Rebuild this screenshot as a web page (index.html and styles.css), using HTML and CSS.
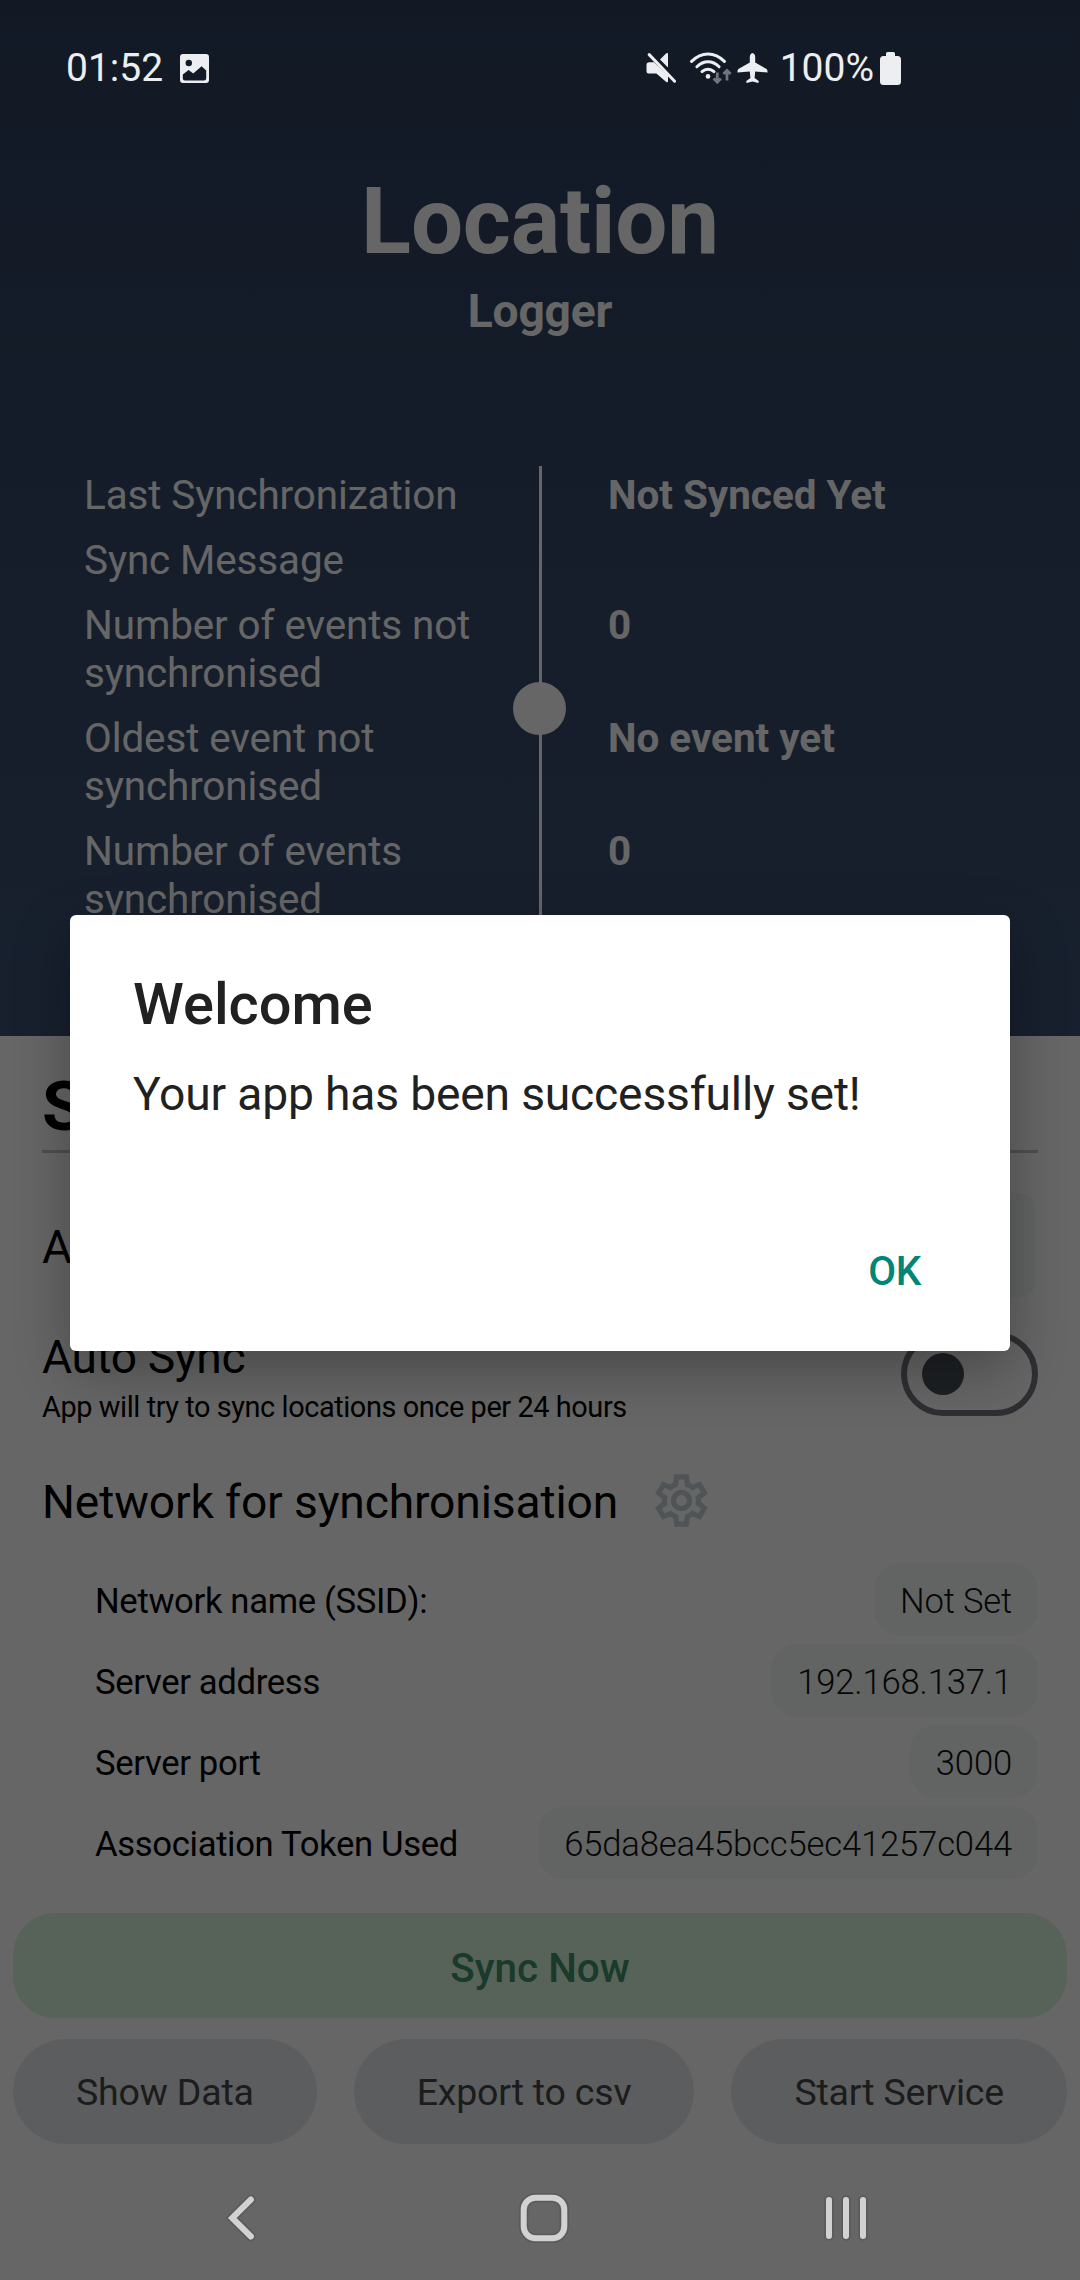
FILE: index.html
```
<!DOCTYPE html>
<html lang="en">
<head>
<meta charset="utf-8">
<title>Location Logger</title>
<link rel="stylesheet" href="styles.css">
</head>
<body>
<div class="screen">
  <header class="hero">
    <h1 class="hero-title">Location</h1>
    <p class="hero-subtitle">Logger</p>
    <div class="stats">
      <span class="stat-label">Last Synchronization</span>
      <span class="stat-value">Not Synced Yet</span>
      <span class="stat-label">Sync Message</span>
      <span class="stat-value"></span>
      <span class="stat-label">Number of events not synchronised</span>
      <span class="stat-value">0</span>
      <span class="stat-label">Oldest event not synchronised</span>
      <span class="stat-value">No event yet</span>
      <span class="stat-label">Number of events synchronised</span>
      <span class="stat-value">0</span>
      <div class="stat-line"><i class="stat-dot"></i></div>
    </div>
  </header>

  <main class="content">
    <section class="settings">
      <h2 class="settings-title">S</h2>
      <div class="row">
        <span class="row-title row-title-app">A</span>
        <span class="app-button"></span>
      </div>
      <div class="row row-sync">
        <div class="row-text">
          <span class="row-title">Auto Sync</span>
          <span class="row-note">App will try to sync locations once per 24 hours</span>
        </div>
        <span class="switch"><i class="switch-thumb"></i></span>
      </div>
      <div class="row-network">
        <h3 class="network-title">Network for synchronisation</h3>
        <svg class="gear" viewBox="0 -960 960 960"><path d="m370-80-16-128q-13-5-24.5-12T307-235l-119 50L78-375l103-78q-1-7-1-13.5v-27q0-6.5 1-13.5L78-585l110-190 119 50q11-8 23-15t24-12l16-128h220l16 128q13 5 24.5 12t22.5 15l119-50 110 190-103 78q1 7 1 13.5v27q0 6.5-2 13.5l103 78-110 190-118-50q-11 8-23 15t-24 12L590-80H370Zm70-80h79l14-106q31-8 57.5-23.5T639-327l99 41 39-68-86-65q5-14 7-29.5t2-31.5q0-16-2-31.5t-7-29.5l86-65-39-68-99 42q-22-23-48.5-38.5T533-694l-13-106h-79l-14 106q-31 8-57.5 23.5T321-633l-99-41-39 68 86 64q-5 15-7 30t-2 32q0 16 2 31t7 30l-86 65 39 68 99-42q22 23 48.5 38.5T427-266l13 106Z"/><circle class="gear-hub" cx="480" cy="-480" r="122"/></svg>
      </div>
      <dl class="network">
        <div class="network-row"><dt>Network name (SSID):</dt><dd>Not Set</dd></div>
        <div class="network-row"><dt>Server address</dt><dd>192.168.137.1</dd></div>
        <div class="network-row"><dt>Server port</dt><dd>3000</dd></div>
        <div class="network-row"><dt>Association Token Used</dt><dd>65da8ea45bcc5ec41257c044</dd></div>
      </dl>
    </section>
    <section class="actions">
      <button class="btn btn-sync">Sync Now</button>
      <div class="btn-row">
        <button class="btn">Show Data</button>
        <button class="btn">Export to csv</button>
        <button class="btn">Start Service</button>
      </div>
    </section>
  </main>

  <div class="scrim">
    <div class="dialog">
      <h2 class="dialog-title">Welcome</h2>
      <p class="dialog-text">Your app has been successfully set!</p>
      <button class="dialog-ok">OK</button>
    </div>
  </div>

  <div class="status-bar">
    <div class="status-left">
      <span>01:52</span>
      <svg class="icon-image" viewBox="0 0 29 29"><path fill-rule="evenodd" d="M3 0H26Q29 0 29 3V26Q29 29 26 29H3Q0 29 0 26V3Q0 0 3 0ZM8.8 5.8A3.2 3.2 0 1 0 8.8 12.2A3.2 3.2 0 1 0 8.8 5.8ZM2.8 20.5V24.2Q2.8 26.4 5 26.4H24Q26.2 26.4 26.2 24.2V16.5L21.6 12.2L13.2 19.4L8.6 16Z"/></svg>
    </div>
    <div class="status-right">
      <svg class="icon-mute" viewBox="0 0 30 30"><path d="M3.2 9.3H8L22 22.6V28.6Q21.6 30 20 28.8L10.4 20.6H3.2Q.5 20.6 .5 18V12Q.5 9.3 3.2 9.3ZM14 6.6L20 .4Q22 -.8 22 1.2V14.4Z"/><path class="stroke" d="M3.2 1.6L28.6 28.2"/></svg>
      <svg class="icon-wifi" viewBox="0 0 42 32"><g class="stroke"><path d="M1.6 9.4Q9 2 18 2T34.4 9.4"/><path d="M6.9 14.8Q12 9.8 18 9.8T29.1 14.8"/><path d="M12 19.6Q14.6 17.2 18 17.2T24 19.6"/></g><circle cx="18" cy="24.4" r="2.3"/><g class="traffic"><path d="M27.3 20.5V30M23.7 26.6L27.3 30.2L30.9 26.6M37 28.4V18.6M33.4 22L37 18.4L40.6 22"/></g></svg>
      <svg class="icon-plane" viewBox="0 0 31 30"><path d="M15.5 0Q18 .6 18.2 4V9.6L29.6 16Q30.6 16.8 30.6 19.4L18.2 18.6L17.6 25L21.4 27.8Q22 29 21.4 30L15.5 28.6L9.6 30Q9 29 9.6 27.8L13.4 25L12.8 18.6L.4 19.4Q.4 16.8 1.4 16L12.8 9.6V4Q13 .6 15.5 0Z"/></svg>
      <span class="battery-text">100%</span>
      <svg class="icon-battery" viewBox="0 0 21 33"><path d="M7.6 0H13.4Q15 0 15 1.6V4H17.5Q21 4 21 7.5V29.5Q21 33 17.5 33H3.5Q0 33 0 29.5V7.5Q0 4 3.5 4H6V1.6Q6 0 7.6 0Z"/></svg>
    </div>
  </div>

  <div class="nav-bar">
    <svg viewBox="0 0 60 60"><path class="halo" d="M39.9 11.5L21.2 30L39.9 48.5"/><path d="M39.9 11.5L21.2 30L39.9 48.5"/></svg>
    <svg viewBox="0 0 60 60"><rect class="halo" x="9.7" y="9.7" width="40.6" height="40.6" rx="12"/><rect x="9.7" y="9.7" width="40.6" height="40.6" rx="12"/></svg>
    <svg viewBox="0 0 60 60"><path class="halo" d="M13 12V48M30 12V48M47 12V48"/><path d="M13 12V48M30 12V48M47 12V48"/></svg>
  </div>
</div>
</body>
</html>
```
FILE: styles.css
```
* { box-sizing: border-box; }

body, h1, h2, h3, p, dl, dd { margin: 0; }

body {
  font-family: Roboto, "Noto Sans", sans-serif;
  color: #000;
  background: #fff;
}

button { font-family: inherit; border: 0; }

.screen {
  position: relative;
  width: 1080px;
  height: 2280px;
  overflow: hidden;
  background: #fff;
}

/* Header */
.hero {
  height: 1036px;
  padding-top: 168px;
  color: #fff;
  background: linear-gradient(#2f405e, #3d5275);
}

.hero-title {
  font-size: 92.4px;
  line-height: 108px;
  letter-spacing: -0.2px;
  text-align: center;
}

.hero-subtitle {
  margin-top: 8px;
  font-size: 46.2px;
  font-weight: 700;
  line-height: 54px;
  letter-spacing: -0.2px;
  text-align: center;
}

.stats {
  display: grid;
  grid-template-columns: 455px 3px 1fr;
  grid-template-rows: 65px 65px repeat(3, 113px);
  margin-top: 128px;
  padding-left: 84px;
  font-size: 40.4px;
  line-height: 48px;
}

.stat-label {
  grid-column: 1;
  padding: 6px 55px 0 0;
  letter-spacing: -0.1px;
}

.stat-value {
  grid-column: 3;
  padding: 6px 0 0 66px;
  font-weight: 700;
}

.stat-line {
  grid-column: 2;
  grid-row: 1 / 6;
  display: flex;
  align-items: center;
  justify-content: center;
  height: 484px;
  background: #fff;
}

.stat-dot {
  flex: none;
  width: 53px;
  height: 53px;
  margin-left: -2px;
  border-radius: 50%;
  background: #fff;
}

/* Settings */
.settings { padding: 30px 42px 0; }

.settings-title {
  height: 87px;
  border-bottom: 3px solid #cac4d0;
  font-size: 69.3px;
  line-height: 82px;
}

.row {
  display: flex;
  align-items: center;
  justify-content: space-between;
  margin-top: 40px;
}

.row-title {
  font-size: 46.2px;
  line-height: 54px;
  letter-spacing: -0.4px;
}

.row-title-app { padding-top: 3px; }

.app-button {
  width: 240px;
  height: 105px;
  margin-right: 3px;
  border-radius: 16px;
  background: #f3faf7;
}

.row-sync {
  align-items: flex-start;
  margin-top: 32px;
}

.row-text {
  display: flex;
  flex-direction: column;
  gap: 6px;
}

.row-note {
  font-size: 28.9px;
  line-height: 34px;
  letter-spacing: -0.42px;
}

.switch {
  display: flex;
  align-items: center;
  width: 137px;
  height: 84px;
  margin-top: 2px;
  padding-left: 15px;
  border: 6px solid #79747e;
  border-radius: 42px;
}

.switch-thumb {
  width: 42px;
  height: 42px;
  border-radius: 50%;
  background: #4a5259;
}

.row-network {
  display: flex;
  align-items: center;
  gap: 32px;
  margin-top: 45px;
}

.network-title {
  padding-top: 2px;
  font-size: 46.2px;
  font-weight: 400;
  line-height: 54px;
  letter-spacing: -0.14px;
}

.gear {
  width: 63px;
  height: 63px;
  fill: #c6d2da;
}

.gear-hub {
  fill: none;
  stroke: #c6d2da;
  stroke-width: 80px;
}

.network {
  display: flex;
  flex-direction: column;
  gap: 8px;
  margin-top: 31px;
  padding-left: 53px;
  font-size: 34.65px;
  line-height: 70px;
}

.network-row {
  display: flex;
  justify-content: space-between;
}

.network-row dt {
  padding-top: 3px;
  letter-spacing: -0.34px;
}

.network-row dd {
  padding: 3px 26px 0;
  border-radius: 26px;
  font-weight: 300;
  letter-spacing: -0.17px;
  color: #111;
  background: #f4faf7;
}

/* Actions */
.actions {
  display: flex;
  flex-direction: column;
  gap: 21px;
  padding: 34px 13px 0;
}

.btn-row {
  display: flex;
  justify-content: space-between;
}

.btn {
  height: 105px;
  padding: 0 63px;
  border-radius: 52.5px;
  font-size: 37.5px;
  letter-spacing: -0.2px;
  color: #464646;
  background: #e6e9ee;
}

.btn-sync {
  padding-top: 5px;
  border-radius: 42px;
  font-size: 40.4px;
  font-weight: 500;
  letter-spacing: 0;
  color: #41916b;
  background: #d9f5dc;
}

/* Dialog */
.scrim {
  position: absolute;
  inset: 0;
  background: rgba(0, 0, 0, 0.6);
}

.dialog {
  display: flex;
  flex-direction: column;
  width: 940px;
  height: 436px;
  margin: 915px auto 0;
  padding: 55px 63px 0;
  border-radius: 6px;
  color: #212121;
  background: #fff;
  box-shadow: 0 18px 56px rgba(0, 0, 0, 0.3);
}

.dialog-title {
  font-size: 57.75px;
  font-weight: 500;
  line-height: 68px;
}

.dialog-text {
  margin-top: 29px;
  font-size: 46.2px;
  line-height: 54px;
  letter-spacing: -0.18px;
}

.dialog-ok {
  align-self: flex-end;
  margin: 127px 26px 0 0;
  padding: 0;
  font-size: 40.4px;
  font-weight: 500;
  line-height: 48px;
  letter-spacing: -0.3px;
  color: #008577;
  background: none;
}

/* System bars */
.status-bar {
  position: absolute;
  inset: 0 0 auto;
  display: flex;
  align-items: center;
  justify-content: space-between;
  height: 136px;
  padding: 0 179px 0 66px;
  font-size: 39px;
  line-height: 46px;
  color: #edeef1;
}

.status-bar svg { fill: #edeef1; }

.status-bar .stroke {
  fill: none;
  stroke: #edeef1;
  stroke-width: 3;
  stroke-linecap: round;
}

.status-bar .traffic {
  fill: none;
  stroke: #72757d;
  stroke-width: 2.8;
}

.status-left, .status-right {
  display: flex;
  align-items: center;
}

.status-left { gap: 17px; }

.icon-image { width: 29px; height: 29px; }
.icon-mute { width: 30px; height: 30px; margin-right: 14px; }
.icon-wifi { width: 42px; height: 32px; margin-right: 5px; }
.icon-plane { width: 31px; height: 30px; margin-right: 12px; }
.icon-battery { width: 21px; height: 33px; margin-left: 6px; }

.nav-bar {
  position: absolute;
  inset: auto 0 0;
  display: flex;
  align-items: center;
  justify-content: space-between;
  height: 124px;
  padding: 0 204px 0 211px;
}

.nav-bar svg {
  width: 60px;
  height: 60px;
  fill: none;
  stroke: #d2d2d2;
  stroke-width: 6;
  stroke-linecap: round;
}

.nav-bar .halo {
  stroke: #5b5b5b;
  stroke-width: 9.5;
}
```
